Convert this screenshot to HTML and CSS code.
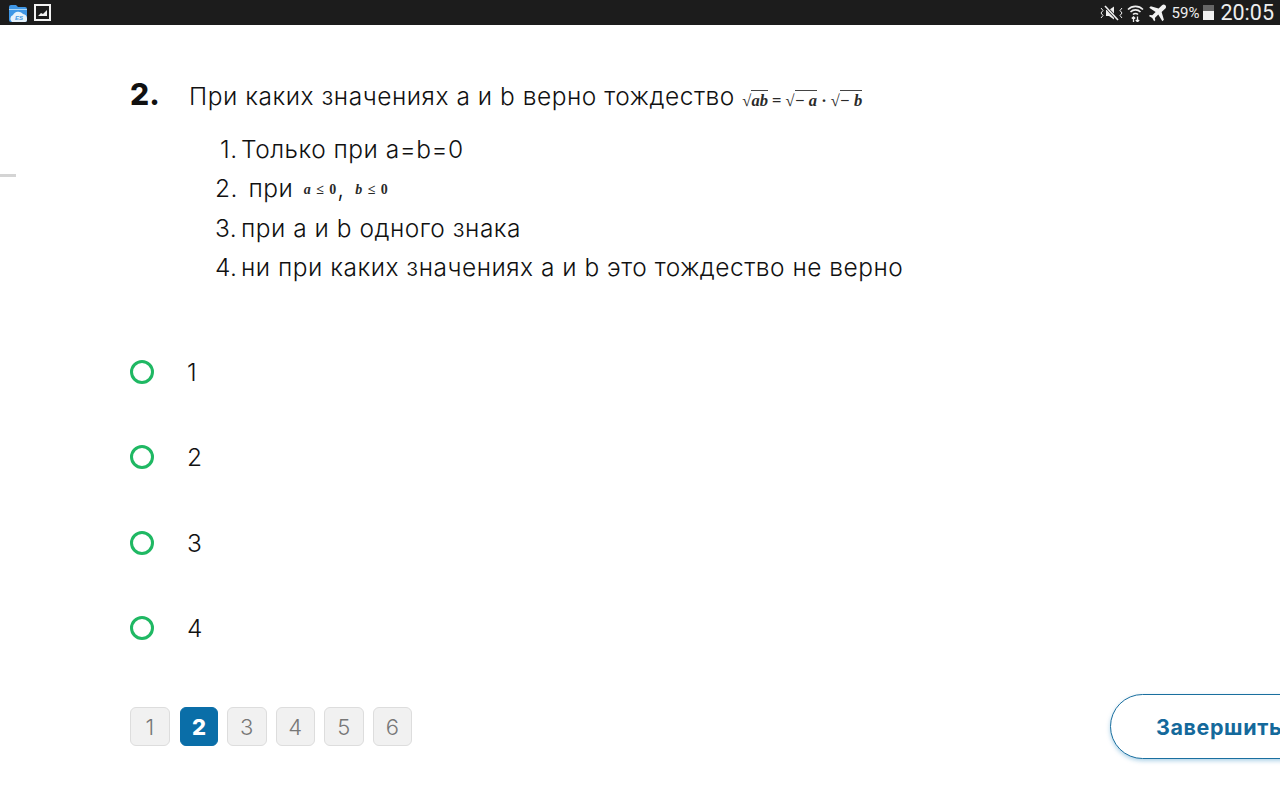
FILE: index.html
```html
<!DOCTYPE html>
<html lang="ru">
<head>
  <meta charset="UTF-8">
  <title>Тест</title>
  <link rel="stylesheet" href="styles.css">
</head>
<body>

  <header class="status-bar">
    <div class="status-left">
      <svg width="18" height="18" viewBox="0 0 18 18">
        <path d="M0 3a2 2 0 0 1 2-2h5l2 2h7a2 2 0 0 1 2 2v11a2 2 0 0 1-2 2H2a2 2 0 0 1-2-2z" fill="#3f97e6"/>
        <path d="M0 5.500h18" stroke="#a9d6f8" stroke-width="1"/>
        <path d="M3 18a4 4 0 0 1 1-7 6 6 0 0 1 10-1 4.500 4.500 0 0 1 4 4v2a2 2 0 0 1-2 2z" fill="#e6f2fb"/>
        <text class="es-mark" x="6" y="16">ES</text>
      </svg>
      <svg width="17" height="17" viewBox="0 0 17 17">
        <rect x="1" y="1" width="15" height="15" fill="#1c1c1c" stroke="#f2f2f2" stroke-width="2"/>
        <path d="M4 12l3-3 2 1 4-4v6z" fill="#f2f2f2"/>
      </svg>
    </div>
    <div class="status-right">
      <svg width="25" height="16" viewBox="0 0 25 16" fill="none" stroke="#eee">
        <path d="M2 3l2 2.500-2 2.500 2 2.500L2 13M23 3l-2 2.500 2 2.500-2 2.500 2 2.500" stroke-width="1"/>
        <path d="M7 5h3l5-3.500v13L10 11H7z" fill="#eee" stroke="none"/>
        <path d="M6 1l13 14" stroke="#1c1c1c" stroke-width="3"/>
        <path d="M6 1l13 14" stroke-width="1.600"/>
      </svg>
      <svg width="17" height="18" viewBox="0 0 17 18" fill="none" stroke="#eee" stroke-width="1.600">
        <path d="M1 5.500a10.500 10.500 0 0 1 15 0M3.500 8a7 7 0 0 1 10 0M6 10.500a3.500 3.500 0 0 1 5 0"/>
        <path d="M6.500 18v-5M4.800 14.500l1.700-1.700 1.700 1.700M10.500 12.500v5M8.800 16l1.700 1.700 1.700-1.700" stroke-width="1.300"/>
      </svg>
      <svg class="plane" width="19" height="18" viewBox="0 0 24 24">
        <path d="M22.500 1.500c-1.200-1.200-3.300-1.200-4.500 0l-4.500 4.500L3 3 1 5l8.500 5.500L5 15l-3-.5L.5 16l4.500 2.500L7.500 23l1.500-1.500L8.500 18.500l4.500-4.500L18.500 23l2-2-3-10.500 5-4.500c1.200-1.200 1.200-3.300 0-4.500z" fill="#f2f2f2"/>
      </svg>
      <span class="battery-text">59%</span>
      <span class="battery"><span class="battery-level"></span></span>
      <span class="clock">20:05</span>
    </div>
  </header>

  <span class="side-mark"></span>

  <main class="content">
    <section class="question">
      <div class="question-num">2.</div>
      <div class="question-text">
        При каких значениях a и b верно тождество
        <span class="formula">
          <span class="root">√<i class="radicand">ab</i></span> = <span class="root">√<i class="radicand">− a</i></span> · <span class="root">√<i class="radicand">− b</i></span>
        </span>
      </div>
    </section>

    <ol class="statements">
      <li><span class="marker first">1.</span>Только при a=b=0</li>
      <li><span class="marker">2.</span>&nbsp;при <span class="formula small"><i>a</i> ≤ 0</span>, <span class="formula small"><i>b</i> ≤ 0</span></li>
      <li><span class="marker">3.</span>при a и b одного знака</li>
      <li><span class="marker">4.</span>ни при каких значениях a и b это тождество не верно</li>
    </ol>

    <div class="answers">
      <label class="answer"><span class="radio"></span>1</label>
      <label class="answer"><span class="radio"></span>2</label>
      <label class="answer"><span class="radio"></span>3</label>
      <label class="answer"><span class="radio"></span>4</label>
    </div>

    <footer class="footer">
      <nav class="pager">
        <a class="page">1</a>
        <a class="page current">2</a>
        <a class="page">3</a>
        <a class="page">4</a>
        <a class="page">5</a>
        <a class="page">6</a>
      </nav>
      <button class="finish">Завершить</button>
    </footer>
  </main>

</body>
</html>
```

FILE: styles.css
```css
html, body {
  margin: 0;
  height: 800px;
  overflow: hidden;
}

body {
  font-family: 'Inter', 'Noto Sans', sans-serif;
  background-color: #fff;
  color: #111;
  position: relative;
}

.status-bar {
  display: flex;
  justify-content: space-between;
  align-items: center;
  height: 25px;
  padding: 0 6px 0 9px;
  background-color: #1c1c1c;
  color: #eee;
}

.status-left {
  display: flex;
  align-items: center;
  gap: 7px;
}

.status-right {
  display: flex;
  align-items: center;
  gap: 3px;
}

.es-mark {
  font-family: 'Liberation Sans', sans-serif;
  font-size: 6px;
  font-weight: 700;
  font-style: italic;
  fill: #3f97e6;
}

.plane {
  margin-left: 1px;
}

.battery-text {
  font-family: 'Roboto', sans-serif;
  font-size: 15px;
  margin-left: 2px;
}

.battery {
  display: flex;
  align-items: flex-end;
  width: 11px;
  height: 15px;
  background-color: #666;
  margin: 0 3px 0 1px;
}

.battery-level {
  display: block;
  width: 100%;
  height: 9px;
  background-color: #f2f2f2;
}

.clock {
  font-family: 'Roboto', sans-serif;
  font-size: 21.500px;
}

.side-mark {
  position: absolute;
  left: 0;
  top: 174px;
  width: 16px;
  height: 3px;
  background-color: #d4d4d4;
}

.content {
  width: 1200px;
  padding: 54px 0 0 130px;
}

.question {
  display: flex;
  align-items: baseline;
}

.question-num {
  width: 59px;
  font-size: 30px;
  font-weight: 800;
  line-height: 30px;
}

.question-text {
  font-size: 24.500px;
  font-weight: 350;
  line-height: 30px;
  letter-spacing: 0.530px;
}

.formula {
  font-family: 'Liberation Serif', serif;
  font-size: 16.500px;
  font-weight: 700;
  letter-spacing: 0;
  color: #2a2a2a;
  position: relative;
  top: 1px;
}

.formula.small {
  font-size: 14px;
  margin-left: 3px;
  letter-spacing: 1px;
}

.radicand {
  border-top: 1px solid #444;
}

.statements {
  list-style: none;
  margin: 15px 0 0;
  padding: 0 0 0 85px;
  font-size: 24.500px;
  font-weight: 350;
  letter-spacing: 0.500px;
}

.statements li {
  height: 39.400px;
  line-height: 39.400px;
  display: flex;
  white-space: pre;
}

.marker {
  width: 26px;
}

.marker.first {
  padding-left: 5px;
  width: 21px;
}

.answers {
  margin-top: 42px;
  display: flex;
  flex-direction: column;
}

.answer {
  display: flex;
  align-items: center;
  height: 85.200px;
  font-size: 24.500px;
  font-weight: 350;
}

.radio {
  box-sizing: border-box;
  width: 24px;
  height: 24px;
  margin-right: 33px;
  border: 3px solid #1fb863;
  border-radius: 50%;
}

.footer {
  display: flex;
  justify-content: space-between;
  align-items: center;
  margin-top: 24px;
}

.pager {
  display: flex;
  gap: 9px;
}

.page {
  box-sizing: border-box;
  width: 39.500px;
  height: 39px;
  display: flex;
  align-items: center;
  justify-content: center;
  background-color: #f1f1f1;
  border: 1px solid #ddd;
  border-radius: 6px;
  color: #777;
  font-size: 22px;
  font-weight: 300;
}

.page.current {
  width: 38px;
  margin-left: 1.500px;
  background-color: #0a6ea8;
  border-color: #0a6ea8;
  color: #fff;
  font-weight: 800;
}

.finish {
  width: 220px;
  height: 65px;
  padding: 0 0 0 45px;
  text-align: left;
  background-color: #fff;
  border: 1px solid #1a6f9f;
  border-radius: 33px;
  box-shadow: 0 2px 4px rgba(30, 130, 190, 0.350);
  color: #14699b;
  font-family: inherit;
  font-size: 21.500px;
  font-weight: 700;
  letter-spacing: 0.600px;
}
```
